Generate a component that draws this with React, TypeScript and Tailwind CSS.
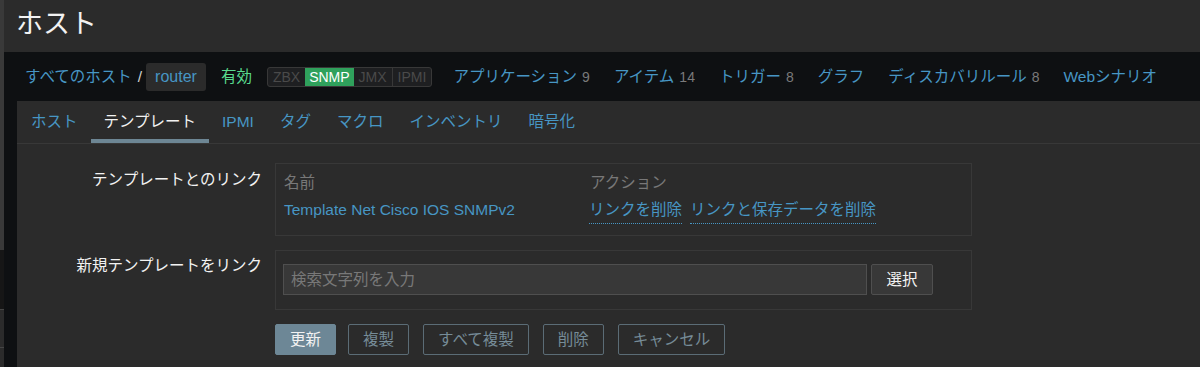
import React from 'react';

const font = "font-['Liberation_Sans','Noto_Sans_CJK_JP',sans-serif]";

const navItems: { label: string; count?: string }[] = [
  { label: 'アプリケーション', count: '9' },
  { label: 'アイテム', count: '14' },
  { label: 'トリガー', count: '8' },
  { label: 'グラフ' },
  { label: 'ディスカバリルール', count: '8' },
  { label: 'Webシナリオ' },
];

const tabs = ['ホスト', 'テンプレート', 'IPMI', 'タグ', 'マクロ', 'インベントリ', '暗号化'];

const StatusGroup = () => (
  <div className="flex h-[20px] rounded-[3px] border border-[#383838] bg-[#1e1f21] text-[14px] leading-[18px] overflow-hidden">
    <span className="px-[5px] text-[#4a4a4a]">ZBX</span>
    <span className="px-[4px] bg-[#2fa15c] text-white">SNMP</span>
    <span className="px-[5px] text-[#4a4a4a]">JMX</span>
    <span className="px-[5px] text-[#4a4a4a] border-l border-[#383838]">IPMI</span>
  </div>
);

export default function App() {
  return (
    <div className={`w-[1200px] h-[367px] flex bg-[#0e1012] overflow-hidden ${font}`}>
      {/* sidebar peeking on the left */}
      <div className="w-[4px] flex flex-col">
        <div className="h-[250px] bg-[#393939]" />
        <div className="h-[59px] bg-[#161616]" />
        <div className="h-px bg-[#454545]" />
        <div className="h-[37px] bg-[#2b2b2b]" />
        <div className="h-px bg-[#454545]" />
        <div className="flex-1 bg-[#2b2b2b]" />
      </div>

      <div className="flex-1 flex flex-col">
        <div className="h-[52px] bg-[#2b2b2b] pl-[12px] flex items-center">
          <h1 className="text-[27px] leading-none text-[#f2f2f2] -mt-[4px]">ホスト</h1>
        </div>

        {/* breadcrumbs */}
        <div className="h-[49px] flex items-center pl-[21px] text-[15.5px] pt-[1px]">
          <span className="text-[#4796c4]">すべてのホスト</span>
          <span className="mx-[6px] text-[#d0d0d0]">/</span>
          <span className="h-[28px] px-[9px] flex items-center rounded-[3px] bg-[#2b2b2b] text-[#4796c4] text-[16px] -ml-[2px]">router</span>
          <span className="ml-[15px] text-[#59db8f]">有効</span>
          <div className="ml-[15px]">
            <StatusGroup />
          </div>
          <div className="ml-[21px] flex gap-[24px]">
            {navItems.map((n) => (
              <span key={n.label} className="text-[#4796c4]">
                {n.label}
                {n.count && <span className="ml-[5px] text-[14px] text-[#7a7a7a]">{n.count}</span>}
              </span>
            ))}
          </div>
        </div>

        {/* panel */}
        <div className="flex-1 ml-[13px] bg-[#2b2b2b]">
          <div className="h-[43px] flex border-b border-[#383838] pl-px">
            {tabs.map((t, i) => (
              <div
                key={t}
                className={`px-[13px] flex items-center border-b-4 pt-[4px] text-[15.5px] ${
                  i === 1 ? 'text-[#f2f2f2] border-[#6d8694]' : 'text-[#4796c4] border-transparent'
                }`}
              >
                {t}
              </div>
            ))}
          </div>

          <div className="pt-[19px] text-[15.5px]">
            <div className="flex">
              <div className="w-[258px] pr-[13px] text-right text-[#f2f2f2] pt-[5px]">テンプレートとのリンク</div>
              <div className="w-[697px] h-[73px] border border-[#383838] px-[8px] pt-[7px]">
                <div className="flex h-[27px] text-[#787878]">
                  <span className="w-[306px]">名前</span>
                  <span>アクション</span>
                </div>
                <div className="flex">
                  <span className="w-[306px] text-[#4796c4]">Template Net Cisco IOS SNMPv2</span>
                  <span className="-ml-px text-[#4796c4] border-b border-dotted border-[#4796c4] pb-[2px]">リンクを削除</span>
                  <span className="ml-[8px] text-[#4796c4] border-b border-dotted border-[#4796c4] pb-[2px]">リンクと保存データを削除</span>
                </div>
              </div>
            </div>

            <div className="flex mt-[14px]">
              <div className="w-[258px] pr-[13px] text-right text-[#f2f2f2] pt-[4px]">新規テンプレートをリンク</div>
              <div className="w-[697px] h-[60px] border border-[#383838] pl-[7px] pt-[13px] flex gap-[4px]">
                <div className="w-[584px] h-[31px] bg-[#383838] border border-[#4f4f4f] flex items-center px-[7px] text-[#787878]">
                  検索文字列を入力
                </div>
                <button className="w-[62px] h-[31px] bg-[#383838] border border-[#4f4f4f] rounded-[2px] text-[#f2f2f2]">
                  選択
                </button>
              </div>
            </div>

            <div className="flex gap-[14px] ml-[258px] mt-[14px]">
              <button className="h-[31px] px-[14px] -mr-[2px] rounded-[2px] bg-[#6d8796] border border-[#6d8796] text-[#f2f2f2]">更新</button>
              {['複製', 'すべて複製', '削除', 'キャンセル'].map((b) => (
                <button
                  key={b}
                  className="h-[31px] px-[14px] rounded-[2px] border border-[#5b6c76] text-[#768c98]"
                >
                  {b}
                </button>
              ))}
            </div>
          </div>
        </div>
      </div>
    </div>
  );
}
